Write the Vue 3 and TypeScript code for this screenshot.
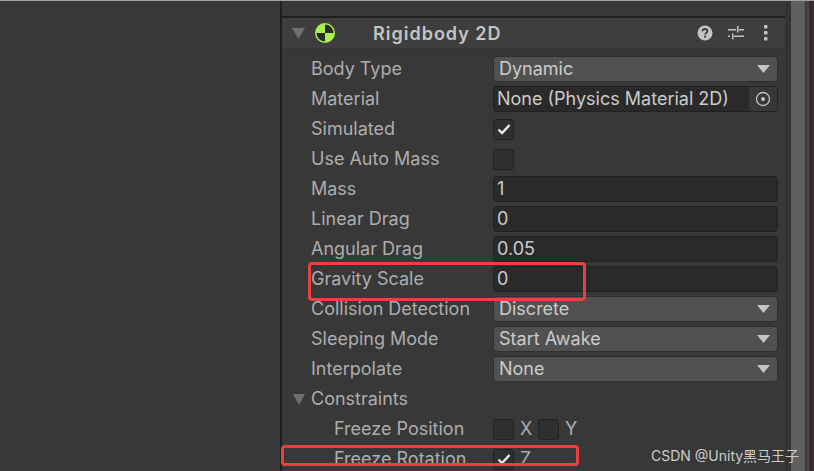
<template>
  <div class="screen">
    <div class="side"></div>
    <div class="inspector">
      <div class="top-strip"></div>
      <div class="header">
        <svg class="head-fold" width="13" height="11" viewBox="0 0 13 11"><path d="M0 0H13L6.500 11Z" fill="#6f6f6f" /></svg>
        <svg class="rb-icon" width="22" height="22" viewBox="0 0 22 22">
          <circle cx="11" cy="11" r="10" fill="#a8f04e" />
          <path d="M11 2.500A8.500 8.500 0 0 1 19.500 11H11ZM11 11V19.500A8.500 8.500 0 0 1 2.500 11Z" fill="#2a2a2a" />
        </svg>
        <span class="title">Rigidbody 2D</span>
        <div class="head-icons">
          <svg width="16" height="16" viewBox="0 0 16 16">
            <circle cx="8" cy="8" r="7.500" fill="#c4c4c4" />
            <path d="M5.500 6.200C5.500 4.800 6.600 4 8 4s2.500.8 2.500 2.100c0 1.800-2.400 1.800-2.400 3.500" fill="none" stroke="#3e3e3e" stroke-width="1.800" />
            <rect x="7.100" y="10.600" width="2" height="2" fill="#3e3e3e" />
          </svg>
          <svg class="sliders" width="16" height="16" viewBox="0 0 16 16" fill="#c4c4c4">
            <rect x="0" y="4" width="8" height="1.500" /><rect x="11" y="4" width="5" height="1.500" />
            <rect x="9" y="1" width="1.500" height="6.500" />
            <rect x="0" y="10.500" width="2" height="1.500" /><rect x="6" y="10.500" width="10" height="1.500" />
            <rect x="4" y="8.500" width="1.500" height="6" />
          </svg>
          <svg width="6" height="16" viewBox="0 0 6 16" fill="#c4c4c4">
            <rect x="1" y="0" width="3.500" height="3.500" rx="1" /><rect x="1" y="6" width="3.500" height="3.500" rx="1" /><rect x="1" y="12" width="3.500" height="3.500" rx="1" />
          </svg>
        </div>
      </div>

      <div class="rows">
        <div class="row" v-for="row in rows" :key="row.label">
          <span class="label">{{ row.label }}</span>
          <div v-if="row.kind === 'select'" class="select">
            <span class="value">{{ row.value }}</span>
            <svg width="13" height="8" viewBox="0 0 13 8"><path d="M0 0H13L6.500 8Z" fill="#c4c4c4" /></svg>
          </div>
          <div v-else-if="row.kind === 'input'" class="input"><span class="value">{{ row.value }}</span></div>
          <div v-else-if="row.kind === 'object'" class="input object">
            <span class="value object-name">{{ row.value }}</span>
            <span class="picker">
              <svg width="16" height="16" viewBox="0 0 16 16"><circle cx="8" cy="8" r="6.500" fill="none" stroke="#c4c4c4" stroke-width="1.300" /><circle cx="8" cy="8" r="2" fill="#c4c4c4" /></svg>
            </span>
          </div>
          <span v-else class="check">
            <svg v-if="row.checked" width="14" height="12" viewBox="0 0 14 12"><path d="M1.500 6.500L5 10L12.500 2" fill="none" stroke="#efefef" stroke-width="2.300" /></svg>
          </span>
        </div>

        <div class="row">
          <span class="label constraints">
            <svg class="fold" width="12" height="11" viewBox="0 0 12 11"><path d="M0 0H12L6 11Z" fill="#6f6f6f" /></svg>
            Constraints
          </span>
        </div>
        <div class="row">
          <span class="label nested">Freeze Position</span>
          <div class="axes">
            <span class="check"></span><span class="axis">X</span>
            <span class="check"></span><span class="axis">Y</span>
          </div>
        </div>
        <div class="row">
          <span class="label nested">Freeze Rotation</span>
          <div class="axes">
            <span class="check">
              <svg width="14" height="12" viewBox="0 0 14 12"><path d="M1.500 6.500L5 10L12.500 2" fill="none" stroke="#efefef" stroke-width="2.300" /></svg>
            </span>
            <span class="axis">Z</span>
          </div>
        </div>
      </div>
    </div>
    <div class="gutter"></div>
    <div class="scrollbar"></div>
    <div class="edge"></div>

    <div class="mark mark-gravity"></div>
    <div class="mark mark-rotation"></div>
    <span class="watermark">CSDN @Unity黑马王子</span>
  </div>
</template>

<script setup lang="ts">
type Row = {
  label: string
  kind: 'select' | 'input' | 'object' | 'check'
  value?: string
  checked?: boolean
}

const rows: Row[] = [
  { label: 'Body Type', kind: 'select', value: 'Dynamic' },
  { label: 'Material', kind: 'object', value: 'None (Physics Material 2D)' },
  { label: 'Simulated', kind: 'check', checked: true },
  { label: 'Use Auto Mass', kind: 'check' },
  { label: 'Mass', kind: 'input', value: '1' },
  { label: 'Linear Drag', kind: 'input', value: '0' },
  { label: 'Angular Drag', kind: 'input', value: '0.05' },
  { label: 'Gravity Scale', kind: 'input', value: '0' },
  { label: 'Collision Detection', kind: 'select', value: 'Discrete' },
  { label: 'Sleeping Mode', kind: 'select', value: 'Start Awake' },
  { label: 'Interpolate', kind: 'select', value: 'None' },
]
</script>

<style>
html,
body {
  margin: 0;
  background: #383838;
  overflow: hidden;
}
</style>

<style scoped>
.screen {
  position: relative;
  display: flex;
  width: 814px;
  height: 471px;
  overflow: hidden;
  background: #383838;
  border-top: 1px solid #a0a0a0;
  box-sizing: border-box;
  font-family: Inter, "Noto Sans CJK SC", sans-serif;
  font-size: 18px;
  color: #adadad;
}

.side {
  width: 280px;
  flex: none;
  border-right: 2px solid #1f1f1f;
  background: #383838;
}

.inspector {
  flex: none;
  width: 503px;
}

.top-strip {
  height: 15px;
  border-bottom: 2px solid #1f1f1f;
}

.header {
  display: flex;
  align-items: center;
  height: 30px;
  background: #3e3e3e;
  border-bottom: 1px solid #333333;
}

.head-fold {
  margin-left: 10px;
}

.rb-icon {
  margin-left: 9px;
}

.title {
  margin-left: 37px;
  font-size: 18px;
  font-weight: 600;
  letter-spacing: 1px;
  color: #c4c4c4;
}

.head-icons {
  display: flex;
  align-items: center;
  gap: 15px;
  margin-left: auto;
  margin-right: 16px;
}

.sliders {
  margin-right: 4px;
}

.rows {
  padding-top: 5px;
}

.row {
  display: flex;
  align-items: center;
  height: 30px;
  padding-left: 29px;
}

.label {
  flex: none;
  width: 182px;
  padding-bottom: 2px;
  white-space: nowrap;
}

.nested {
  padding-left: 23px;
  width: 159px;
}

.constraints {
  position: relative;
}

.fold {
  position: absolute;
  left: -18px;
  top: 6px;
}

.select,
.input {
  flex: none;
  box-sizing: border-box;
  display: flex;
  align-items: center;
  width: 285px;
  height: 26px;
  border-radius: 4px;
  color: #cbcbcb;
}

.value {
  padding-bottom: 2px;
}

.select {
  justify-content: space-between;
  padding: 0 7px 0 5px;
  background: #515151;
  border: 1px solid #2f2f2f;
}

.input {
  padding-left: 3px;
  background: #2a2a2a;
  border: 1px solid #212121;
}

.object {
  overflow: hidden;
}

.object-name {
  flex: 1;
}

.picker {
  display: flex;
  align-items: center;
  justify-content: center;
  width: 28px;
  height: 100%;
  background: #383838;
}

.check {
  flex: none;
  box-sizing: border-box;
  display: flex;
  align-items: center;
  justify-content: center;
  width: 21px;
  height: 21px;
  border-radius: 3px;
  background: #2f2f2f;
  border: 1px solid #222222;
}

.axes {
  display: flex;
  align-items: center;
}

.axis {
  width: 24px;
  padding: 0 0 2px 6px;
  box-sizing: border-box;
}

.gutter {
  flex: none;
  width: 6px;
  background: #333333;
}

.scrollbar {
  flex: none;
  width: 14px;
  background: #5f5f5f;
}

.edge {
  flex: 1;
  background: linear-gradient(90deg, #3c3c3c 0 2px, #4a4a4a 2px 4px, #2f2f2f 4px 5px, #3a2c2a 5px);
}

.mark {
  position: absolute;
  box-sizing: border-box;
  border: 3px solid #ee3f3f;
  border-radius: 4px;
}

.mark-gravity {
  left: 308px;
  top: 261px;
  width: 278px;
  height: 39px;
}

.mark-rotation {
  left: 281px;
  top: 444px;
  width: 298px;
  height: 21px;
}

.watermark {
  position: absolute;
  left: 651px;
  top: 444px;
  font-size: 14px;
  color: #cccccc;
  white-space: nowrap;
}
</style>
